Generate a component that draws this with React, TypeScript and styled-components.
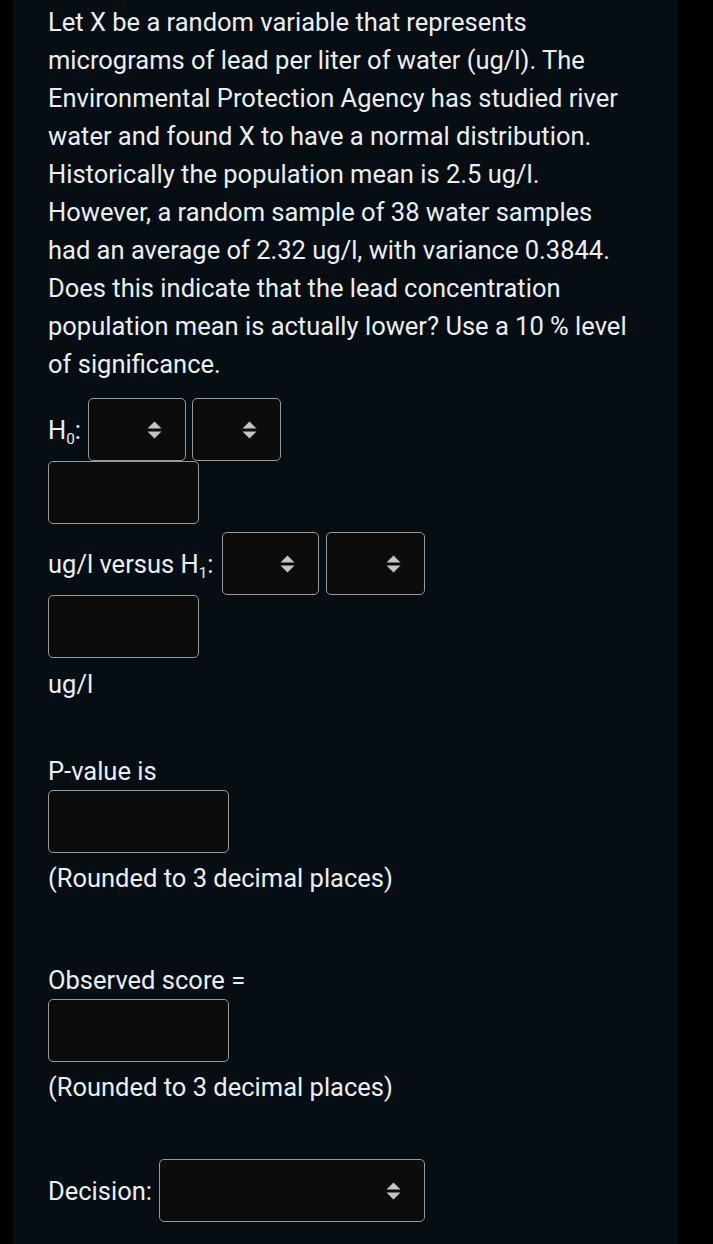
import React from 'react';
import styled, { createGlobalStyle } from 'styled-components';

const GlobalStyle = createGlobalStyle`
  html, body {
    margin: 0;
    padding: 0;
    background: #000;
  }
`;

const Panel = styled.div`
  margin-left: 13px;
  width: 665px;
  min-height: 1244px;
  box-sizing: border-box;
  background: #060e14;
  padding: 3px 45px 20px 35px;
  font-family: Roboto, 'Liberation Sans', sans-serif;
  font-size: 25.5px;
  line-height: 38px;
  color: #e9eef0;
`;

const Question = styled.p`
  margin: 0 0 15px;
`;

const Row = styled.div<{ gap?: number; mt?: number }>`
  display: flex;
  align-items: center;
  gap: ${(p) => p.gap ?? 6}px;
  margin-top: ${(p) => p.mt ?? 0}px;
`;

const Label = styled.span<{ mr?: number }>`
  white-space: nowrap;
  margin-right: ${(p) => p.mr ?? 0}px;
`;

const Line = styled.div<{ mt?: number }>`
  margin-top: ${(p) => p.mt ?? 0}px;
`;

const Box = styled.div<{ w: number; mt?: number }>`
  width: ${(p) => p.w}px;
  height: 63px;
  box-sizing: border-box;
  margin-top: ${(p) => p.mt ?? 0}px;
  border: 1px solid #9a9a9a;
  border-radius: 5px;
  background: #0d0c0c;
`;

const SelectBox = styled(Box)`
  display: flex;
  align-items: center;
  justify-content: flex-end;
  padding-right: 23px;
`;

const Sub = styled.sub`
  font-size: 0.6em;
  vertical-align: -0.3em;
  line-height: 0;
`;

const Arrows = () => (
  <svg width="15" height="18" viewBox="0 0 15 18">
    <polygon points="7.5,0.5 14.5,7.5 0.5,7.5" fill="#c4c4c4" />
    <polygon points="0.5,10.5 14.5,10.5 7.5,17.5" fill="#c4c4c4" />
  </svg>
);

const Select = ({ w, mt }: { w: number; mt?: number }) => (
  <SelectBox w={w} mt={mt}>
    <Arrows />
  </SelectBox>
);

export default function App() {
  return (
    <>
      <GlobalStyle />
      <Panel>
        <Question>
          Let X be a random variable that represents micrograms of lead per liter of water (ug/l). The
          Environmental Protection Agency has studied river water and found X to have a normal
          distribution. Historically the population mean is 2.5 ug/l. However, a random sample of 38
          water samples had an average of 2.32 ug/l, with variance 0.3844. Does this indicate that the
          lead concentration population mean is actually lower? Use a 10 % level of significance.
        </Question>

        <Row gap={6}>
          <Label mr={1}>
            H<Sub>0</Sub>:
          </Label>
          <Select w={98} />
          <Select w={89} />
        </Row>
        <Box w={151} />

        <Row gap={7} mt={8}>
          <Label mr={2}>
            ug/l versus H<Sub>1</Sub>:
          </Label>
          <Select w={97} />
          <Select w={99} />
        </Row>
        <Box w={151} />
        <Line mt={7}>ug/l</Line>

        <Line mt={49}>P-value is</Line>
        <Box w={181} />
        <Line mt={6}>(Rounded to 3 decimal places)</Line>

        <Line mt={64}>Observed score =</Line>
        <Box w={181} />
        <Line mt={6}>(Rounded to 3 decimal places)</Line>

        <Row gap={7} mt={53}>
          <Label>Decision:</Label>
          <Select w={266} />
        </Row>
      </Panel>
    </>
  );
}
